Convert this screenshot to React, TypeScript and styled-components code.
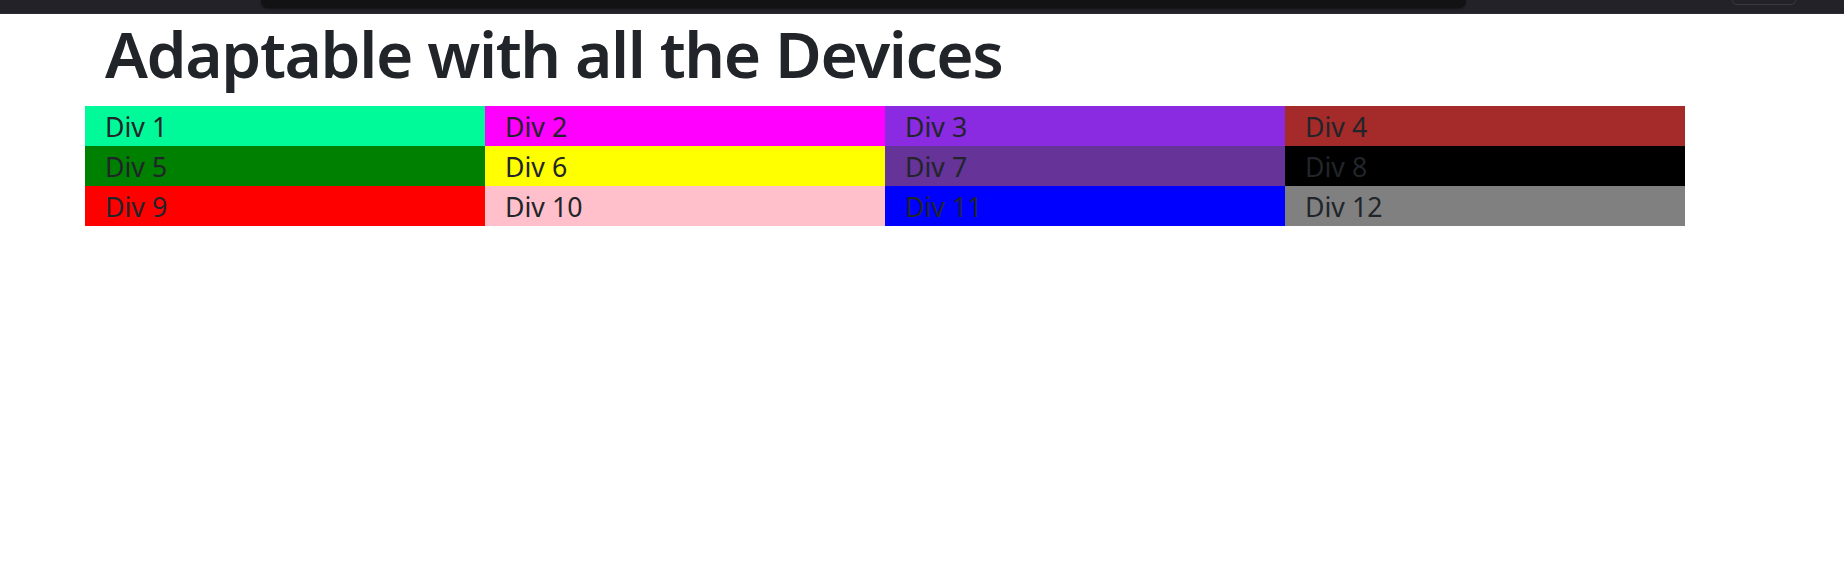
import styled, { createGlobalStyle } from "styled-components";

const GlobalStyle = createGlobalStyle`
  body {
    margin: 0;
    background: #ffffff;
    color: #212529;
    font-family: "Noto Sans", "Open Sans", "Liberation Sans", sans-serif;
  }
`;

const TopBar = styled.div`
  height: 13px;
  background-color: #232228;
  border-bottom: 1px solid #2e2d33;
  display: flex;
  align-items: flex-start;
`;

const AddressSlot = styled.div`
  margin-left: 261px;
  width: 1205px;
  height: 8px;
  background-color: #121214;
  border-radius: 0 0 7px 7px;
  box-shadow: 0 1px 2px rgba(0, 0, 0, 0.4);
`;

const CornerButton = styled.div`
  margin-left: 266px;
  width: 62px;
  height: 4px;
  border: 1px solid #3b3a41;
  border-top: none;
  border-radius: 0 0 5px 5px;
`;

const Container = styled.div`
  width: 1600px;
  margin-left: 85px;
`;

const Title = styled.h1`
  margin: 0 0 12px;
  padding: 0 20px;
  font-size: 64px;
  line-height: 80px;
  font-weight: 600;
  letter-spacing: -1.4px;
  color: #212529;
`;

const Grid = styled.div`
  display: grid;
  grid-template-columns: repeat(4, 1fr);
`;

const Cell = styled.div<{ bg: string }>`
  height: 40px;
  padding: 0 20px;
  background-color: ${(props) => props.bg};
  font-size: 26.7px;
  line-height: 41px;
  color: #212529;
`;

const colors = [
  "#00fa9a",
  "#ff00ff",
  "#8a2be2",
  "#a52a2a",
  "#008000",
  "#ffff00",
  "#663399",
  "#000000",
  "#ff0000",
  "#ffc0cb",
  "#0000ff",
  "#808080",
];

const App = () => {
  return (
    <>
      <GlobalStyle />
      <TopBar>
        <AddressSlot />
        <CornerButton />
      </TopBar>
      <Container>
        <Title>Adaptable with all the Devices</Title>
        <Grid>
          {colors.map((c, i) => (
            <Cell key={i} bg={c}>
              Div {i + 1}
            </Cell>
          ))}
        </Grid>
      </Container>
    </>
  );
};

export default App;
